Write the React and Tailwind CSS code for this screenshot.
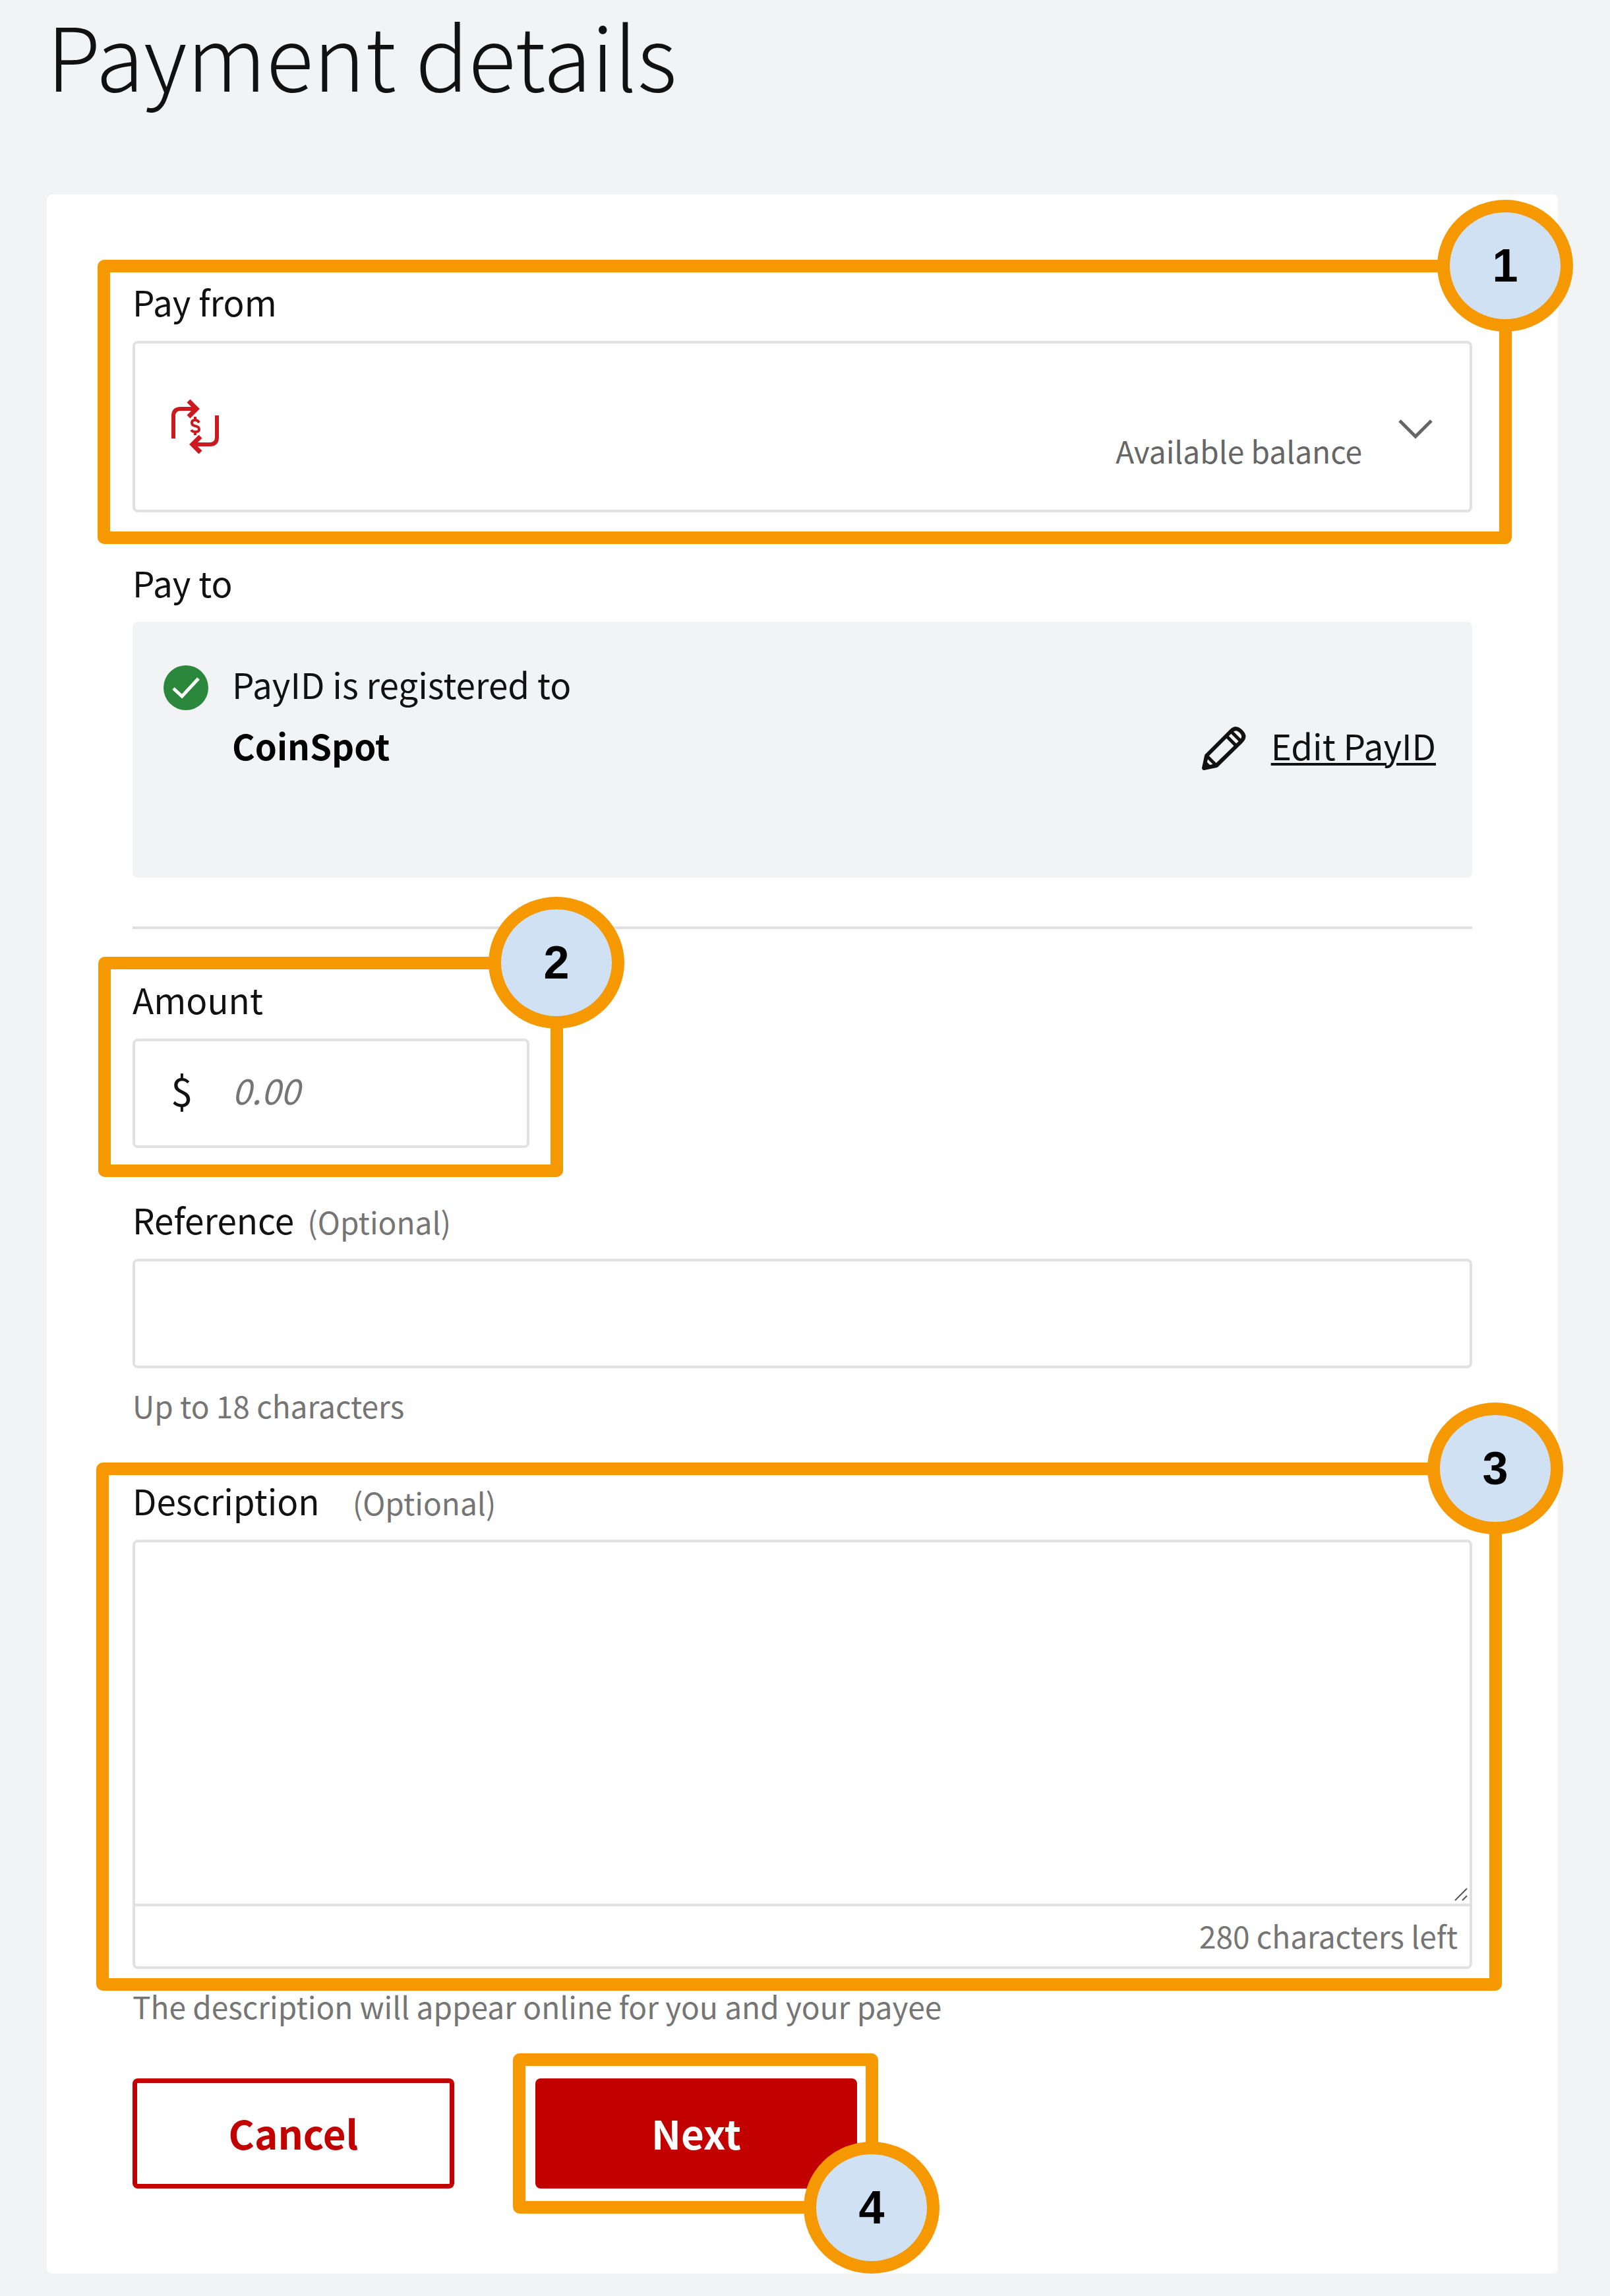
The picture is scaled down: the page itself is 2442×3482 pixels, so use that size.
import React, { useState } from 'react';

const MAX_DESCRIPTION = 280;

const TransferIcon = () => (
  <svg viewBox="0 0 76 84" className="h-[84px] w-[76px] shrink-0" fill="none" stroke="#cb1a1f" strokeWidth="6" aria-hidden="true">
    <path d="M4 60V26Q4 15 15 15H38" />
    <path d="M27 3L39 15L27 27" strokeWidth="7" />
    <path d="M70 25V58Q70 69 59 69H34" />
    <path d="M45 57L33 69L45 81" strokeWidth="7" />
    <path d="M43 36Q41 32 37 32Q32 32 32 36Q32 40 37 41Q43 42 43 46Q43 50 37 50Q33 50 31 47M37 27V32M37 50V55" strokeWidth="4" />
  </svg>
);

const PencilIcon = () => (
  <svg viewBox="0 0 68 68" className="mt-2 h-[68px] w-[68px] shrink-0" fill="none" stroke="#111" strokeWidth="6" strokeLinejoin="round" aria-hidden="true">
    <path d="M4 64L8 45L45 8Q52 1 59 7L61 9Q68 16 60 24L23 60Z" />
    <path d="M8 45L23 60" strokeWidth="5" />
    <path d="M38 15L53 30M45 8L60 23" strokeWidth="5" />
    <path d="M4 64L6 54L14 62Z" fill="#111" strokeWidth="3" />
  </svg>
);

const CheckIcon = () => (
  <svg viewBox="0 0 68 68" className="mt-[18px] h-[68px] w-[68px] shrink-0" aria-hidden="true">
    <circle cx="34" cy="34" r="34" fill="#2b873b" />
    <path d="M15 35L28 47L53 20" fill="none" stroke="#fff" strokeWidth="5" />
  </svg>
);

// Orange outline with a numbered marker on one of its right corners
const Step = ({ number, className, low }) => (
  <div className={`pointer-events-none absolute z-10 rounded-[10px] border-[19px] border-[#f69900] ${className}`}>
    <div
      className={`absolute flex h-[200px] w-[206px] items-center justify-center rounded-[50%] border-[19px] border-[#f69900] bg-[#cfe1f3]
        font-['Liberation_Sans',sans-serif] text-[70px] leading-none font-bold text-black
        ${low ? '-right-[112px] -bottom-[110px]' : '-top-[110px] -right-[112px]'}`}
    >
      {number}
    </div>
  </div>
);

const Optional = () => <span className="text-[46px] leading-[56px] text-[#757575]">(Optional)</span>;

const App = () => {
  const [amount, setAmount] = useState('');
  const [reference, setReference] = useState('');
  const [description, setDescription] = useState('');

  return (
    <main className="min-h-screen bg-[#f2f3f5] pr-[79px] pb-[33px] pl-[71px] font-['Noto_Sans_CJK_SC',sans-serif] text-[53px] leading-[64px] text-[#111]">
      <h1 className="pb-[133px] text-[133px] leading-[162px] font-light">Payment details</h1>

      <form className="rounded-lg bg-white px-[130px] pt-[130px] pb-[129px]" onSubmit={(e) => e.preventDefault()}>
        {/* Pay from */}
        <div className="relative">
          <label htmlFor="payFrom" className="mb-7 block">Pay from</label>
          <div className="relative flex h-[260px] items-center rounded-lg border-4 border-[#e1e1e1] pr-[56px] pl-[54px]">
            <TransferIcon />
            <span className="mb-[62px] ml-auto self-end text-[46px] leading-[56px] text-[#666]">Available balance</span>
            <svg viewBox="0 0 52 30" className="mt-2 ml-[55px] h-[30px] w-[52px]" fill="none" stroke="#666" strokeWidth="5" aria-hidden="true">
              <path d="M2 2L26 26L50 2" />
            </svg>
            <select id="payFrom" className="absolute inset-0 h-full w-full appearance-none bg-transparent">
              <option value="" />
            </select>
          </div>
          <Step number="1" className="-top-[31px] -right-[60px] -bottom-[48px] -left-[53px]" />
        </div>

        {/* Pay to */}
        <div className="mt-[74px]">
          <h2 className="mb-7">Pay to</h2>
          <div className="flex h-[388px] items-start rounded-lg bg-[#f2f3f5] pt-12 pr-[55px] pl-[47px]">
            <CheckIcon />
            <p className="ml-9 leading-[93px]">
              PayID is registered to
              <br />
              <strong className="font-bold text-black">CoinSpot</strong>
            </p>
            <a href="#payid" className="mt-[93px] ml-auto flex items-center gap-[38px] leading-[93px]">
              <PencilIcon />
              <span className="underline decoration-4 underline-offset-4">Edit PayID</span>
            </a>
          </div>
        </div>

        <hr className="my-[74px] border-t-4 border-[#e1e1e1]" />

        {/* Amount */}
        <div className="relative w-[602px]">
          <label htmlFor="amount" className="mb-7 block">Amount</label>
          <div className="flex h-[166px] items-center rounded-lg border-4 border-[#e1e1e1] pb-3 pl-[54px]">
            <span className="w-[93px] shrink-0 text-[60px]">$</span>
            <input
              id="amount"
              type="text"
              placeholder="0.00"
              className="h-full w-full min-w-0 bg-transparent outline-none placeholder:text-[#757575] placeholder:italic"
              value={amount}
              onChange={(e) => setAmount(e.target.value)}
            />
          </div>
          <Step number="2" className="-top-[32px] -right-[51px] -bottom-[44px] -left-[52px]" />
        </div>

        {/* Reference */}
        <div className="mt-[76px]">
          <label htmlFor="reference" className="mb-7 flex items-baseline gap-5">
            Reference <Optional />
          </label>
          <input
            id="reference"
            type="text"
            maxLength={18}
            className="block h-[166px] w-full rounded-lg border-4 border-[#e1e1e1] bg-white px-[54px] outline-none"
            value={reference}
            onChange={(e) => setReference(e.target.value)}
          />
          <p className="mt-7 text-[46px] leading-[56px] text-[#757575]">Up to 18 characters</p>
        </div>

        {/* Description */}
        <div className="relative mt-[84px]">
          <label htmlFor="description" className="mb-7 flex items-baseline gap-[50px]">
            Description <Optional />
          </label>
          <div className="relative rounded-lg border-4 border-[#e1e1e1]">
            <textarea
              id="description"
              maxLength={MAX_DESCRIPTION}
              className="block h-[548px] w-full resize-none bg-transparent px-[54px] py-8 outline-none"
              value={description}
              onChange={(e) => setDescription(e.target.value)}
            />
            <svg viewBox="0 0 20 20" className="absolute top-[524px] right-[3px] h-5 w-5" stroke="#555" strokeWidth="2" aria-hidden="true">
              <path d="M1 19L19 1M12 19L19 12" />
            </svg>
            <p className="h-[95px] border-t-4 border-[#e1e1e1] pr-[18px] text-right text-[46px] leading-[88px] text-[#757575]">
              {MAX_DESCRIPTION - description.length} characters left
            </p>
          </div>
          <Step number="3" className="-top-[25px] -right-[45px] -bottom-[33px] -left-[55px]" />
        </div>
        <p className="mt-7 text-[46px] leading-[56px] text-[#757575]">The description will appear online for you and your payee</p>

        {/* Actions */}
        <div className="mt-[82px] flex gap-[123px]">
          <button type="button" className="h-[167px] w-[488px] rounded-lg border-[7px] border-[#c20000] bg-white pb-1 text-[60px] font-bold text-[#c20000]">
            Cancel
          </button>
          <div className="relative">
            <button type="submit" className="h-[167px] w-[488px] rounded-lg bg-[#c20000] pb-1 text-[60px] font-bold text-white">
              Next
            </button>
            <Step number="4" low className="-top-[38px] -right-[32px] -bottom-[38px] -left-[34px]" />
          </div>
        </div>
      </form>
    </main>
  );
};

export default App;
